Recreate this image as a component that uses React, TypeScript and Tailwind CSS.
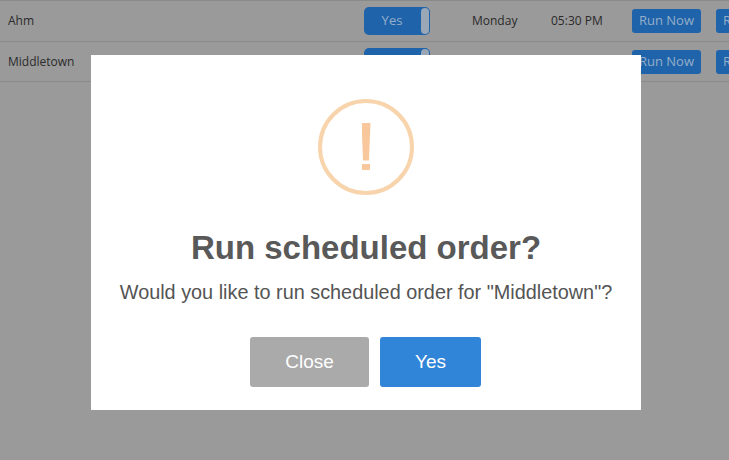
import React from 'react';

const rows = [
  { name: 'Ahm', day: 'Monday', time: '05:30 PM', height: 'h-[41px]', nameClass: '' },
  { name: 'Middletown', day: '', time: '', height: 'h-[40px]', nameClass: 'pt-px' },
];

type RowProps = { name: string; day: string; time: string; height: string; nameClass: string };

const ScheduleRow = ({ name, day, time, height, nameClass }: RowProps) => (
  <div className={`flex ${height} items-center border-b border-[#8a8a8a] text-[12px] text-[#2b2b2b]`}>
    <div className={`w-[364px] shrink-0 pl-2 ${nameClass}`}>{name}</div>
    <div className="flex h-7 w-[66px] shrink-0 items-center justify-between rounded-[5px] bg-[#1f63aa] pr-px text-[13px] text-[#95aec9]">
      <span className="w-[56px] text-center">Yes</span>
      <span className="h-[26px] w-2 rounded-[4px] bg-[#9aa7b6]" />
    </div>
    <div className="ml-[42px] w-[79px] shrink-0">{day}</div>
    <div className="w-[81px] shrink-0">{time}</div>
    <div className="flex h-6 w-[69px] shrink-0 items-center justify-center rounded-[3px] bg-[#1f63aa] text-[13px] text-[#95aec9]">Run Now</div>
    <div className="ml-[15px] flex h-6 w-[69px] shrink-0 items-center rounded-[3px] bg-[#1f63aa] pl-[7px] text-[13px] text-[#95aec9]">Run Now</div>
  </div>
);

export default function App() {
  return (
    <div className="relative h-[460px] w-[729px] overflow-hidden bg-[#9a9a9a] font-['Open_Sans',sans-serif]">
      <div className="border-t border-[#8a8a8a]">
        {rows.map((row) => (
          <ScheduleRow key={row.name} {...row} />
        ))}
      </div>

      {/* Modal */}
      <div className="absolute left-[91px] top-[55px] flex h-[355px] w-[550px] flex-col items-center bg-white font-['Liberation_Sans',Arial,sans-serif]">
        <div className="mt-[44px] flex h-24 w-24 items-center justify-center rounded-full border-4 border-[#f8d4ad]">
          <div className="mb-[2px] flex flex-col items-center">
            <span className="h-[38px] w-[9px] bg-[#f8c79b]" style={{ clipPath: 'polygon(0 0,100% 0,83% 100%,17% 100%)' }} />
            <span className="mt-[3px] h-[6px] w-[8px] bg-[#f8c79b]" />
          </div>
        </div>
        <h2 className="mt-[34px] text-[33px] font-bold leading-[37px] text-[#595959]">Run scheduled order?</h2>
        <p className="mt-[13px] text-[19.85px] leading-[26px] text-[#545454]">Would you like to run scheduled order for "Middletown"?</p>
        <div className="mr-px mt-[32px] flex gap-[11px]">
          <button className="h-[50px] w-[119px] rounded-[3px] bg-[#aaaaaa] text-[19px] text-white">Close</button>
          <button className="h-[50px] w-[101px] rounded-[3px] bg-[#3085d9] text-[19px] text-white">Yes</button>
        </div>
      </div>
    </div>
  );
}
